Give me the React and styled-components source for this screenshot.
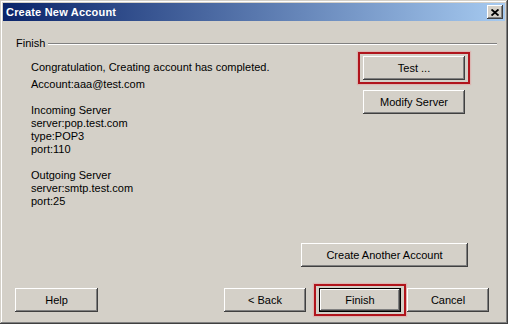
import React from "react";
import styled, { createGlobalStyle } from "styled-components";

const GlobalStyle = createGlobalStyle`
  html, body {
    margin: 0;
    padding: 0;
    background: #d4d0c8;
  }
  body {
    font-family: "Liberation Sans", Arial, sans-serif;
    font-size: 11px;
    color: #000;
  }
`;

const Window = styled.div`
  width: 508px;
  height: 324px;
  box-sizing: border-box;
  padding: 3px;
  display: flex;
  flex-direction: column;
  background: #d4d0c8;
  box-shadow: inset -1px -1px #404040, inset 1px 1px #d4d0c8,
    inset -2px -2px #808080, inset 2px 2px #ffffff;
`;

const TitleBar = styled.div`
  height: 18px;
  display: flex;
  align-items: center;
  justify-content: space-between;
  padding: 0 2px 0 3px;
  background: linear-gradient(to right, #0a246a, #a6caf0);
`;

const Title = styled.span`
  color: #fff;
  font-weight: bold;
  font-size: 11px;
  letter-spacing: 0.2px;
`;

const CloseButton = styled.div`
  width: 16px;
  height: 14px;
  display: flex;
  align-items: center;
  justify-content: center;
  background: #d4d0c8;
  box-shadow: inset -1px -1px #404040, inset 1px 1px #ffffff,
    inset -2px -2px #808080;
`;

const Body = styled.div`
  flex: 1;
  display: flex;
  flex-direction: column;
  padding: 16px 8px 5px 12px;
`;

const GroupHeader = styled.div`
  display: flex;
  align-items: center;
  height: 13px;
  line-height: 13px;
`;

const GroupLabel = styled.span`
  margin-left: 1px;
`;

const GroupLine = styled.div`
  flex: 1;
  margin-left: 3px;
  margin-top: 1px;
  border-top: 1px solid #808080;
  border-bottom: 1px solid #ffffff;
`;

const ContentRow = styled.div`
  display: flex;
  justify-content: space-between;
  margin-top: 2px;
`;

const InfoColumn = styled.div`
  margin-left: 16px;
  padding-top: 9px;
  line-height: 13px;
`;

const Line = styled.div`
  margin-top: ${(p) => p.$gap || 0}px;
`;

const ActionColumn = styled.div`
  display: flex;
  flex-direction: column;
  align-items: center;
  gap: 6px;
  margin-right: 27px;
`;

const Highlight = styled.div`
  display: flex;
  border: 2px solid #b0141c;
  padding: 2px ${(p) => p.$padX || 2}px;
  box-shadow: 0 0 1px 1px rgba(230, 150, 150, 0.45);
`;

const Button = styled.div`
  width: ${(p) => p.$w || 82}px;
  height: 24px;
  box-sizing: border-box;
  display: flex;
  align-items: center;
  justify-content: center;
  background: #d4d0c8;
  cursor: default;
  box-shadow: ${(p) =>
    p.$default
      ? "inset 0 0 0 1px #000, inset -2px -2px #404040, inset 2px 2px #ffffff, inset -3px -3px #808080"
      : "inset -1px -1px #404040, inset 1px 1px #ffffff, inset -2px -2px #808080"};
`;

const Spacer = styled.div`
  flex: 1;
`;

const CreateRow = styled.div`
  display: flex;
  justify-content: flex-end;
  margin-right: 29px;
  margin-bottom: 17px;
`;

const Footer = styled.div`
  display: flex;
  align-items: center;
  height: 32px;
  margin-right: 8px;
`;

const NavGroup = styled.div`
  margin-left: auto;
  display: flex;
  align-items: center;
  gap: 8px;

  & > :last-child {
    margin-left: -7px;
  }
`;

const CloseIcon = () => (
  <svg width="8" height="7" viewBox="0 0 8 7">
    <path d="M0.5 0.5 L7.5 6.5 M7.5 0.5 L0.5 6.5" stroke="#000" strokeWidth="1.9" />
  </svg>
);

export default function App() {
  return (
    <>
      <GlobalStyle />
      <Window>
        <TitleBar>
          <Title>Create New Account</Title>
          <CloseButton>
            <CloseIcon />
          </CloseButton>
        </TitleBar>
        <Body>
          <GroupHeader>
            <GroupLabel>Finish</GroupLabel>
            <GroupLine />
          </GroupHeader>
          <ContentRow>
            <InfoColumn>
              <Line>Congratulation, Creating account has completed.</Line>
              <Line $gap={4}>Account:aaa@test.com</Line>
              <Line $gap={13}>Incoming Server</Line>
              <Line>server:pop.test.com</Line>
              <Line>type:POP3</Line>
              <Line>port:110</Line>
              <Line $gap={13}>Outgoing Server</Line>
              <Line>server:smtp.test.com</Line>
              <Line>port:25</Line>
            </InfoColumn>
            <ActionColumn>
              <Highlight $padX={3}>
                <Button $w={102}>Test ...</Button>
              </Highlight>
              <Button $w={102}>Modify Server</Button>
            </ActionColumn>
          </ContentRow>
          <Spacer />
          <CreateRow>
            <Button $w={167}>Create Another Account</Button>
          </CreateRow>
          <Footer>
            <Button $w={83}>Help</Button>
            <NavGroup>
              <Button>&lt; Back</Button>
              <Highlight $padX={3}>
                <Button $default>Finish</Button>
              </Highlight>
              <Button>Cancel</Button>
            </NavGroup>
          </Footer>
        </Body>
      </Window>
    </>
  );
}
